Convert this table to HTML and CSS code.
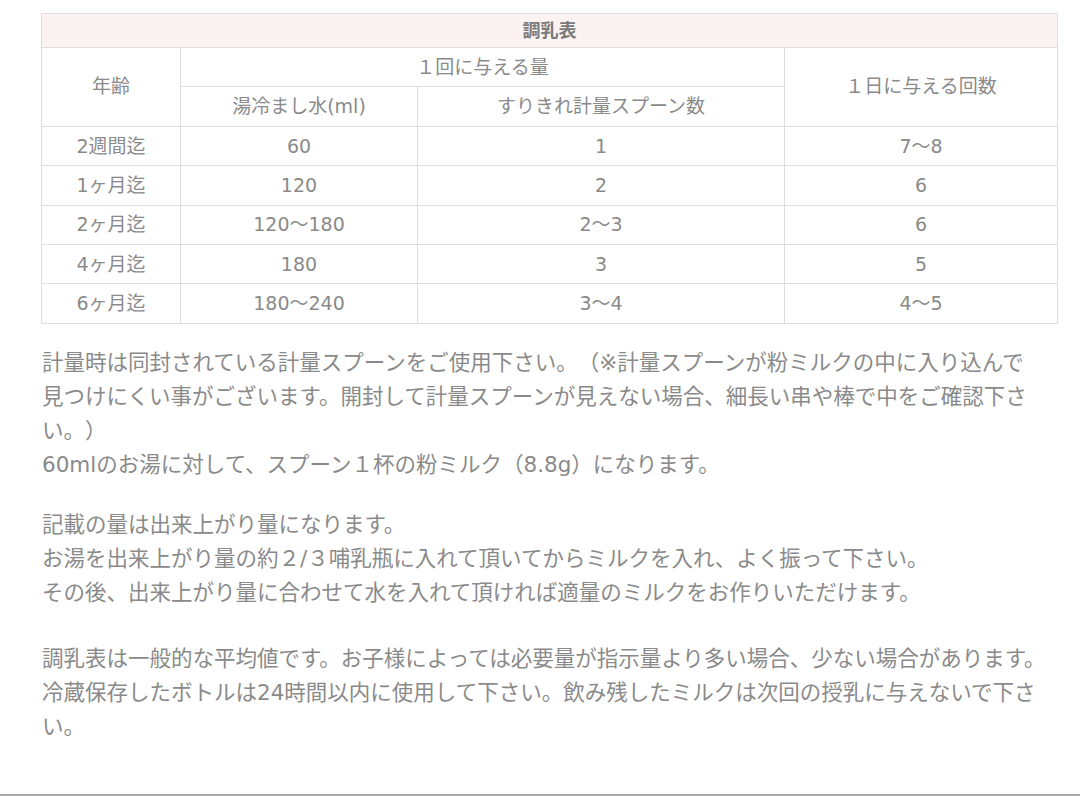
FILE: index.html
```html
<!DOCTYPE html>
<html lang="ja">
<head>
<meta charset="utf-8">
<title>調乳表</title>
<link rel="stylesheet" href="styles.css">
</head>
<body>
<main class="page">
  <table class="chart">
    <colgroup>
      <col class="c-age">
      <col class="c-water">
      <col class="c-spoon">
      <col class="c-times">
    </colgroup>
    <thead>
      <tr class="title-row"><th colspan="4">調乳表</th></tr>
      <tr><td rowspan="2">年齢</td><td colspan="2">１回に与える量</td><td rowspan="2">１日に与える回数</td></tr>
      <tr><td>湯冷まし水(ml)</td><td>すりきれ計量スプーン数</td></tr>
    </thead>
    <tbody>
      <tr><td>2週間迄</td><td>60</td><td>1</td><td>7〜8</td></tr>
      <tr><td>1ヶ月迄</td><td>120</td><td>2</td><td>6</td></tr>
      <tr><td>2ヶ月迄</td><td>120〜180</td><td>2〜3</td><td>6</td></tr>
      <tr><td>4ヶ月迄</td><td>180</td><td>3</td><td>5</td></tr>
      <tr><td>6ヶ月迄</td><td>180〜240</td><td>3〜4</td><td>4〜5</td></tr>
    </tbody>
  </table>

  <p class="note note-first">計量時は同封されている計量スプーンをご使用下さい。（※計量スプーンが粉ミルクの中に入り込んで<br>見つけにくい事がございます。開封して計量スプーンが見えない場合、細長い串や棒で中をご確認下さ<br>い。）<br>60mlのお湯に対して、スプーン１杯の粉ミルク（8.8g）になります。</p>

  <p class="note note-second">記載の量は出来上がり量になります。<br>お湯を出来上がり量の約２/３哺乳瓶に入れて頂いてからミルクを入れ、よく振って下さい。<br>その後、出来上がり量に合わせて水を入れて頂ければ適量のミルクをお作りいただけます。</p>

  <p class="note note-third">調乳表は一般的な平均値です。お子様によっては必要量が指示量より多い場合、少ない場合があります。<br>冷蔵保存したボトルは24時間以内に使用して下さい。飲み残したミルクは次回の授乳に与えないで下さ<br>い。</p>
</main>
<div class="bottom-rule"></div>
</body>
</html>
```
FILE: styles.css
```css
html, body {
  margin: 0;
  padding: 0;
  background: #ffffff;
}

body {
  font-family: "DejaVu Sans", "Noto Sans CJK JP", sans-serif;
  color: #8a8a8a;
  width: 1080px;
  height: 796px;
  overflow: hidden;
  display: flex;
  flex-direction: column;
  text-spacing-trim: space-all;
}

.page {
  flex: 1;
  padding: 13px 0 0 41px;
}

.chart {
  width: 1016px;
  table-layout: fixed;
  border-collapse: collapse;
  font-size: 19px;
  color: #8a8a8a;
}

.c-age { width: 139px; }
.c-water { width: 237px; }
.c-spoon { width: 367px; }
.c-times { width: 273px; }

.chart th,
.chart td {
  border: 1px solid #dedede;
  text-align: center;
  vertical-align: middle;
  padding: 0;
  line-height: 1.2;
  font-weight: 400;
}

.chart tr {
  height: 39.4px;
}

.chart .title-row {
  height: 34px;
}

.chart .title-row th {
  background: #fbf3f2;
  font-weight: 700;
  color: #7a7a7a;
  font-size: 18px;
}

.note {
  margin: 0 0 0 1px;
  font-size: 21.5px;
  line-height: 34px;
  white-space: nowrap;
}

.note-first { margin-top: 22px; }
.note-second { margin-top: 26px; }
.note-third { margin-top: 32px; }

.bottom-rule {
  height: 2px;
  background: #a8a8a8;
}
```
